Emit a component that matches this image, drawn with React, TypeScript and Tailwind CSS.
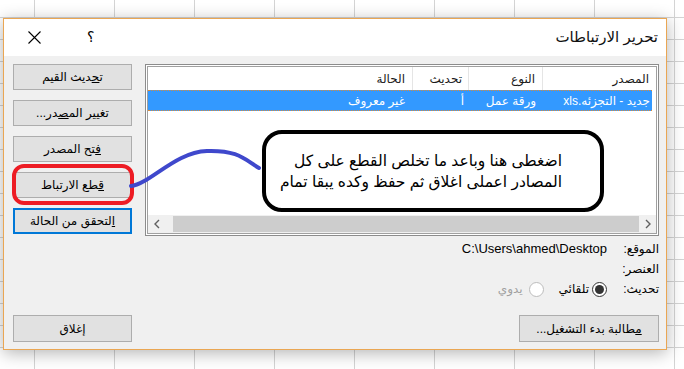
import React from "react";

const font = "font-['Liberation_Sans','DejaVu_Sans',sans-serif]";

function Btn({
  children,
  className = "",
  focus = false,
}: {
  children: React.ReactNode;
  className?: string;
  focus?: boolean;
}) {
  return (
    <div
      className={`flex items-center justify-center bg-[#e1e1e1] text-[12px] text-black ${
        focus ? "border-2 border-[#0078d7]" : "border border-[#adadad]"
      } ${className}`}
    >
      <span>{children}</span>
    </div>
  );
}

function Chevron({ dir }: { dir: "left" | "right" }) {
  return (
    <svg width="8" height="10" viewBox="0 0 8 10">
      <path
        d={dir === "left" ? "M6 1 L2 5 L6 9" : "M2 1 L6 5 L2 9"}
        fill="none"
        stroke="#606060"
        strokeWidth="1.4"
      />
    </svg>
  );
}

export default function App() {
  return (
    <div
      className={`relative w-[684px] h-[369px] overflow-hidden pt-[18px] pl-[3px] bg-white bg-[linear-gradient(to_right,#d4d4d4_1px,transparent_1px),linear-gradient(to_bottom,#d4d4d4_1px,transparent_1px)] bg-size-[80px_22px] bg-position-[34px_17px] ${font}`}
    >
      {/* dialog */}
      <div
        dir="rtl"
        className="w-[664px] h-[332px] border border-[#eaa653] bg-[#f0f0f0] shadow-[0_3px_16px_rgba(0,0,0,0.3)] flex flex-col"
      >
        <div className="h-[37px] bg-white flex items-center justify-between">
          <span className="pr-[8px] text-[15px] text-[#111]">تحرير الارتباطات</span>
          <div className="flex items-center gap-[46px] pl-[24px]">
            <span className="text-[14px] text-black">؟</span>
            <svg width="13" height="13" viewBox="0 0 13 13">
              <path d="M0.5 0.5 L12.5 12.5 M12.5 0.5 L0.5 12.5" stroke="#000" strokeWidth="1.1" />
            </svg>
          </div>
        </div>

        <div className="flex-1 pt-[8px] pr-[7px] pl-[9px] pb-[7px] flex flex-col">
          <div className="flex justify-between">
            {/* list + info */}
            <div className="w-[514px] flex flex-col">
              <div className="h-[172px] border border-[#8c8c8c] p-px bg-white">
                <div className="h-full border border-[#a0a0a0] flex flex-col">
                  <div className="flex-1 pr-[4px]">
                    <div className="flex h-[23px] items-center text-[12px] text-[#1a1a1a]">
                      <div className="w-[110px] h-full flex items-center pr-[3px] border-l border-[#e5e5e5]">المصدر</div>
                      <div className="w-[74px] h-full flex items-center pr-[7px] border-l border-[#e5e5e5]">النوع</div>
                      <div className="w-[56px] h-full flex items-center pr-[6px] border-l border-[#e5e5e5]">تحديث</div>
                      <div className="flex-1 h-full flex items-center pr-[7px]">الحالة</div>
                    </div>
                    <div className="flex h-[21px] items-center bg-[#3399ff] border-y border-dotted border-[#d88a3a] text-[12px] text-white">
                      <div className="w-[110px] pr-[2px] whitespace-nowrap overflow-hidden">جديد - التجزئه.xls</div>
                      <div className="w-[74px] pr-[6px]">ورقة عمل</div>
                      <div className="w-[56px] pr-[4px]">أ</div>
                      <div className="flex-1 pr-[7px]">غير معروف</div>
                    </div>
                  </div>
                  <div className="h-[18px] bg-[#f0f0f0] flex items-center">
                    <div className="w-[17px] flex justify-center">
                      <Chevron dir="right" />
                    </div>
                    <div className="flex-1 h-full pl-[8px] py-[1px]">
                      <div className="h-full bg-[#cdcdcd]" />
                    </div>
                    <div className="w-[17px] flex justify-center">
                      <Chevron dir="left" />
                    </div>
                  </div>
                </div>
              </div>

              <div className="mt-[3px] flex flex-col text-[12px] text-black">
                <div className="h-[20px] flex items-center">
                  <span className="w-[52px]">الموقع:</span>
                  <span dir="ltr" className="text-[13px]">C:\Users\ahmed\Desktop</span>
                </div>
                <div className="h-[20px] flex items-center">
                  <span className="w-[52px]">العنصر:</span>
                </div>
                <div className="h-[20px] flex items-center">
                  <span className="w-[52px]">تحديث:</span>
                  <span className="w-[15px] h-[15px] rounded-full border border-[#333] bg-white flex items-center justify-center">
                    <span className="w-[9px] h-[9px] rounded-full bg-[#333]" />
                  </span>
                  <span className="mr-[3px]">تلقائي</span>
                  <span className="mr-[15px] w-[15px] h-[15px] rounded-full border border-[#bcbcbc] bg-white" />
                  <span className="mr-[6px] text-[#a0a0a0]">يدوي</span>
                </div>
              </div>
            </div>

            {/* side buttons */}
            <div className="w-[119px] flex flex-col gap-[10px]">
              <Btn className="h-[26px]">
                ت<span className="underline">ح</span>ديث القيم
              </Btn>
              <Btn className="h-[26px]">
                تغيير الم<span className="underline">ص</span>در...
              </Btn>
              <Btn className="h-[26px]">
                <span className="underline">ف</span>تح المصدر
              </Btn>
              <Btn className="h-[26px]">
                <span className="underline">ق</span>طع الارتباط
              </Btn>
              <Btn className="h-[26px]" focus>
                <span className="underline">ا</span>لتحقق من الحالة
              </Btn>
            </div>
          </div>

          <div className="mt-auto flex justify-between">
            <Btn className="w-[140px] h-[27px]">
              <span className="underline">م</span>طالبة بدء التشغيل...
            </Btn>
            <Btn className="w-[119px] h-[27px]">
              <span className="underline">إ</span>غلاق
            </Btn>
          </div>
        </div>
      </div>

      {/* annotation: red ring round the button */}
      <div className="absolute left-[12px] top-[164px] w-[122px] h-[41px] border-4 border-[#ed1c24] rounded-[12px]" />

      {/* annotation: connector */}
      <svg className="absolute left-0 top-0" width="684" height="369">
        <path
          d="M131 186 C 150 184, 175 152, 207 151 S 245 160, 259 168"
          fill="none"
          stroke="#3f48cc"
          strokeWidth="4"
          strokeLinecap="round"
        />
      </svg>

      {/* annotation: callout */}
      <div
        dir="rtl"
        className="absolute left-[262px] top-[130px] w-[342px] h-[82px] border-4 border-black rounded-[20px] bg-white flex flex-col justify-center pr-[38px] text-[15.5px] leading-[21px] text-black"
      >
        <div>اضغطى هنا وباعد ما تخلص القطع على كل</div>
        <div>المصادر اعملى اغلاق ثم حفظ وكده يبقا تمام</div>
      </div>
    </div>
  );
}
